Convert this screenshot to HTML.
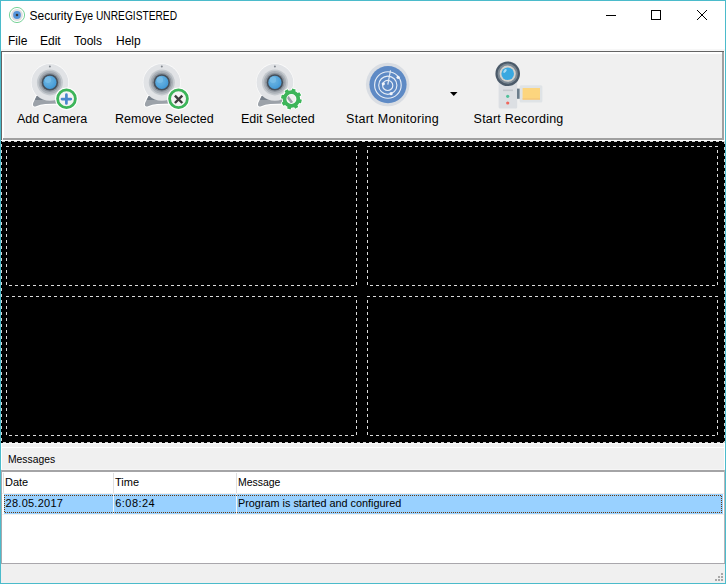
<!DOCTYPE html>
<html><head><meta charset="utf-8">
<style>
html,body{margin:0;padding:0;width:726px;height:584px;overflow:hidden;background:#fff;}
body{position:relative;font-family:"Liberation Sans",sans-serif;color:#000;}
.a{position:absolute;}
.t{position:absolute;white-space:nowrap;line-height:1;transform-origin:0 0;}
</style></head><body>
<!-- window border -->
<div class="a" style="left:0;top:0;width:726px;height:1px;background:#4bbbcb"></div>
<div class="a" style="left:0;top:0;width:1px;height:584px;background:#4bbbcb"></div>
<div class="a" style="left:725px;top:0;width:1px;height:584px;background:#4bbbcb"></div>
<div class="a" style="left:0;top:583px;width:726px;height:1px;background:#4bbbcb"></div>

<!-- title -->
<div class="t" style="left:29.5px;top:10px;font-size:12px;">Security</div>
<div class="t" style="left:75.2px;top:10px;font-size:12px;transform:scaleX(0.87);">Eye</div>
<div class="t" style="left:96px;top:10px;font-size:12px;transform:scaleX(0.85);">UNREGISTERED</div>

<!-- menu -->
<div class="t" style="left:8px;top:35px;font-size:12px;">File</div>
<div class="t" style="left:40px;top:35px;font-size:12px;">Edit</div>
<div class="t" style="left:74px;top:35px;font-size:12px;">Tools</div>
<div class="t" style="left:116px;top:35px;font-size:12px;">Help</div>

<!-- toolbar panel -->
<div class="a" style="left:1px;top:49px;width:724px;height:2px;background:#f7f7f7"></div>
<div class="a" style="left:1px;top:51px;width:724px;height:90px;background:#f0f0f0"></div>
<div class="a" style="left:1px;top:51px;width:723px;height:1px;background:#646464"></div>
<div class="a" style="left:1px;top:51px;width:1px;height:89px;background:#646464"></div>
<div class="a" style="left:2px;top:52px;width:721px;height:2px;background:#fff"></div>
<div class="a" style="left:2px;top:52px;width:2px;height:87px;background:#fff"></div>
<div class="a" style="left:3px;top:138px;width:721px;height:2px;background:#a0a0a0"></div>
<div class="a" style="left:722px;top:52px;width:2px;height:88px;background:#a0a0a0"></div>
<div class="a" style="left:1px;top:140px;width:724px;height:1px;background:#fff"></div>
<div class="a" style="left:724px;top:51px;width:1px;height:90px;background:#fff"></div>


<!-- title controls & icon -->
<svg class="a" style="left:0;top:0" width="726" height="140">
 <circle cx="17" cy="15" r="7.6" fill="none" stroke="#7ad39a" stroke-width="1"/>
 <circle cx="17" cy="15" r="5.9" fill="#dedede"/>
 <circle cx="17" cy="15" r="3.9" fill="#5594da"/>
 <circle cx="17" cy="15" r="1.3" fill="#3a3a3a"/>
 <g shape-rendering="crispEdges">
  <rect x="606" y="15" width="10" height="1" fill="#000"/>
  <rect x="651.5" y="10.5" width="9" height="9" fill="none" stroke="#000" stroke-width="1"/>
 </g>
 <path shape-rendering="crispEdges" fill="#000" d="M697 10h1v1h-1zM706 10h1v1h-1zM698 11h1v1h-1zM705 11h1v1h-1zM699 12h1v1h-1zM704 12h1v1h-1zM700 13h1v1h-1zM703 13h1v1h-1zM701 14h1v1h-1zM702 14h1v1h-1zM702 15h1v1h-1zM701 15h1v1h-1zM703 16h1v1h-1zM700 16h1v1h-1zM704 17h1v1h-1zM699 17h1v1h-1zM705 18h1v1h-1zM698 18h1v1h-1zM706 19h1v1h-1zM697 19h1v1h-1z"/>
</svg>
<svg class="a" style="left:0;top:0" width="726" height="140">
 <defs>
  <radialGradient id="lens" cx="0.38" cy="0.36" r="0.7">
   <stop offset="0" stop-color="#6ab5e2"/>
   <stop offset="0.5" stop-color="#5aa9dd"/>
   <stop offset="1" stop-color="#3f97d6"/>
  </radialGradient>
  <radialGradient id="rg" cx="0.5" cy="0.5" r="0.5">
   <stop offset="0.62" stop-color="#6f7780"/>
   <stop offset="0.8" stop-color="#9aa0a6"/>
   <stop offset="1" stop-color="#c8cbcf"/>
  </radialGradient>
  
  
 </defs>
 <g transform="translate(49.9 82.4)">
   <circle r="19" fill="#fcfcfc"/>
   <path d="M-13.4 13.5 L-16.7 20.5 Q-17.8 24.2 -14.4 24.2 Q-9.5 21.9 -4.7 21.6 L10 21.2 L10 14 Z" fill="#fff" stroke="#fff" stroke-width="2"/>
   <path d="M-13.4 13.5 L-16.7 20.5 Q-17.8 24.2 -14.4 24.2 Q-9.5 21.9 -4.7 21.6 L10 21.2 L10 14 Z" fill="#9ca2a9"/>
   <path d="M-13 13.5 L-15 17.5 L8 17.5 L8 14 Z" fill="#78818b"/>
   <circle r="18.4" fill="#e1e3e6"/>
   <circle r="13" fill="#c4c9ce"/>
   <circle r="11.3" fill="#aab0b7"/>
   <circle r="9.7" fill="#8d949c"/>
   <circle r="8.2" fill="#46505b"/>
   <circle r="6.6" fill="url(#lens)"/>
   <circle cx="-1.9" cy="-2.6" r="3.2" fill="#7dc0e9" opacity="0.7"/>
   <circle cx="0" cy="-15.8" r="1" fill="#80868d"/></g>
 <g transform="translate(66.5 98.8)">
   <circle r="11.4" fill="#fff"/>
   <circle r="10.3" fill="#f4f4f4"/>
   <circle r="8.9" fill="none" stroke="#3db55a" stroke-width="2.8"/></g>
 <path d="M62 99.1H70.8M66.4 94.7V103.5" stroke="#4a87cd" stroke-width="2.7" stroke-linecap="round"/>

 <g transform="translate(161.8 82.4)">
   <circle r="19" fill="#fcfcfc"/>
   <path d="M-13.4 13.5 L-16.7 20.5 Q-17.8 24.2 -14.4 24.2 Q-9.5 21.9 -4.7 21.6 L10 21.2 L10 14 Z" fill="#fff" stroke="#fff" stroke-width="2"/>
   <path d="M-13.4 13.5 L-16.7 20.5 Q-17.8 24.2 -14.4 24.2 Q-9.5 21.9 -4.7 21.6 L10 21.2 L10 14 Z" fill="#9ca2a9"/>
   <path d="M-13 13.5 L-15 17.5 L8 17.5 L8 14 Z" fill="#78818b"/>
   <circle r="18.4" fill="#e1e3e6"/>
   <circle r="13" fill="#c4c9ce"/>
   <circle r="11.3" fill="#aab0b7"/>
   <circle r="9.7" fill="#8d949c"/>
   <circle r="8.2" fill="#46505b"/>
   <circle r="6.6" fill="url(#lens)"/>
   <circle cx="-1.9" cy="-2.6" r="3.2" fill="#7dc0e9" opacity="0.7"/>
   <circle cx="0" cy="-15.8" r="1" fill="#80868d"/></g>
 <g transform="translate(178.5 98.8)">
   <circle r="11.4" fill="#fff"/>
   <circle r="10.3" fill="#f4f4f4"/>
   <circle r="8.9" fill="none" stroke="#3db55a" stroke-width="2.8"/></g>
 <path d="M174.9 95.6L182.3 103M182.3 95.6L174.9 103" stroke="#3c3c3c" stroke-width="2.4"/>

 <g transform="translate(274.9 82.4)">
   <circle r="19" fill="#fcfcfc"/>
   <path d="M-13.4 13.5 L-16.7 20.5 Q-17.8 24.2 -14.4 24.2 Q-9.5 21.9 -4.7 21.6 L10 21.2 L10 14 Z" fill="#fff" stroke="#fff" stroke-width="2"/>
   <path d="M-13.4 13.5 L-16.7 20.5 Q-17.8 24.2 -14.4 24.2 Q-9.5 21.9 -4.7 21.6 L10 21.2 L10 14 Z" fill="#9ca2a9"/>
   <path d="M-13 13.5 L-15 17.5 L8 17.5 L8 14 Z" fill="#78818b"/>
   <circle r="18.4" fill="#e1e3e6"/>
   <circle r="13" fill="#c4c9ce"/>
   <circle r="11.3" fill="#aab0b7"/>
   <circle r="9.7" fill="#8d949c"/>
   <circle r="8.2" fill="#46505b"/>
   <circle r="6.6" fill="url(#lens)"/>
   <circle cx="-1.9" cy="-2.6" r="3.2" fill="#7dc0e9" opacity="0.7"/>
   <circle cx="0" cy="-15.8" r="1" fill="#80868d"/></g>
 <g transform="translate(291.4 99)">
  <path d="M-4.2 -2.6L0.6 3.8" stroke="#9aa0a8" stroke-width="2.6"/>
  <path fill-rule="evenodd" d="M0.23 -8.70L0.76 -10.47L4.24 -9.61L3.88 -7.79A8.7 8.7 0 0 1 6.31 -5.99L7.95 -6.86L9.79 -3.79L8.25 -2.76A8.7 8.7 0 0 1 8.70 0.23L10.47 0.76L9.61 4.24L7.79 3.88A8.7 8.7 0 0 1 5.99 6.31L6.86 7.95L3.79 9.79L2.76 8.25A8.7 8.7 0 0 1 -0.23 8.70L-0.76 10.47L-4.24 9.61L-3.88 7.79A8.7 8.7 0 0 1 -6.31 5.99L-7.95 6.86L-9.79 3.79L-8.25 2.76A8.7 8.7 0 0 1 -8.70 -0.23L-10.47 -0.76L-9.61 -4.24L-7.79 -3.88A8.7 8.7 0 0 1 -5.99 -6.31L-6.86 -7.95L-3.79 -9.79L-2.76 -8.25A8.7 8.7 0 0 1 0.23 -8.70ZM0 -5A5 5 0 1 0 0 5A5 5 0 1 0 0 -5Z" fill="none" stroke="#fff" stroke-width="1.6" stroke-linejoin="round"/>
  <path fill-rule="evenodd" d="M0.23 -8.70L0.76 -10.47L4.24 -9.61L3.88 -7.79A8.7 8.7 0 0 1 6.31 -5.99L7.95 -6.86L9.79 -3.79L8.25 -2.76A8.7 8.7 0 0 1 8.70 0.23L10.47 0.76L9.61 4.24L7.79 3.88A8.7 8.7 0 0 1 5.99 6.31L6.86 7.95L3.79 9.79L2.76 8.25A8.7 8.7 0 0 1 -0.23 8.70L-0.76 10.47L-4.24 9.61L-3.88 7.79A8.7 8.7 0 0 1 -6.31 5.99L-7.95 6.86L-9.79 3.79L-8.25 2.76A8.7 8.7 0 0 1 -8.70 -0.23L-10.47 -0.76L-9.61 -4.24L-7.79 -3.88A8.7 8.7 0 0 1 -5.99 -6.31L-6.86 -7.95L-3.79 -9.79L-2.76 -8.25A8.7 8.7 0 0 1 0.23 -8.70ZM0 -5A5 5 0 1 0 0 5A5 5 0 1 0 0 -5Z" fill="#3db55a"/>
 </g>

 <!-- radar -->
 <circle cx="387.7" cy="84.5" r="21.8" fill="#d9dde3"/>
 <circle cx="388" cy="84.6" r="18.6" fill="#5e8ac5"/>
 <g fill="none" stroke="#e6edf6" stroke-width="1.15">
  <circle cx="387.9" cy="85" r="13.3"/>
  <circle cx="387.8" cy="85.2" r="9.1"/>
  <circle cx="387.7" cy="85.4" r="5.1"/>
  <path d="M387.8 84.6L390.5 70.3"/>
 </g>
 <g fill="#f2f5fb">
  <circle cx="398.1" cy="77.3" r="1.6"/>
  <circle cx="383.3" cy="83.8" r="1.6"/>
  <circle cx="391.1" cy="93.7" r="1.6"/>
 </g>
 <path d="M450 92H457.5L453.75 96Z" fill="#000"/>

 <!-- camcorder -->
 <rect x="498.6" y="79" width="18.6" height="29.5" rx="1.5" fill="#dcdfe3"/>
 <circle cx="507.7" cy="73.7" r="12.3" fill="#4b5a69"/>
 <circle cx="507.7" cy="73.7" r="10.1" fill="#7c8994"/>
 <circle cx="507.7" cy="73.7" r="8.1" fill="#d4d2cd"/>
 <circle cx="507.7" cy="73.7" r="6.3" fill="#3aa8e0"/>
 <ellipse cx="505" cy="71" rx="1.2" ry="2.2" transform="rotate(40 505 71)" fill="#a9dcf5"/>
 <rect x="503" y="89.5" width="10" height="1.6" fill="#c4c8cd"/>
 <circle cx="507.7" cy="96.3" r="1.6" fill="#50c19a"/>
 <circle cx="507.7" cy="103" r="1.6" fill="#f0675c"/>
 <rect x="517" y="88.6" width="3" height="10.2" fill="#6b7d8b"/>
 <rect x="519.6" y="85.2" width="22.8" height="17.4" rx="1.5" fill="#dfe3e6"/>
 <rect x="522.6" y="88" width="17.4" height="11.6" fill="#fcd57e"/><rect x="522.6" y="98.3" width="17.4" height="1.3" fill="#f5c679"/>
</svg>

<!-- toolbar labels -->
<div class="t" style="left:17px;top:113px;font-size:12.5px;">Add Camera</div>
<div class="t" style="left:115px;top:113px;font-size:12.5px;">Remove Selected</div>
<div class="t" style="left:241px;top:113px;font-size:12.5px;">Edit Selected</div>
<div class="t" style="left:346px;top:113px;font-size:12.5px;letter-spacing:0.3px;">Start Monitoring</div>
<div class="t" style="left:473.6px;top:113px;font-size:12.5px;letter-spacing:0.2px;">Start Recording</div>

<!-- video area -->
<div class="a" style="left:1px;top:141px;width:724px;height:302px;background:#000"></div>
<svg class="a" style="left:0;top:0" width="726" height="584" shape-rendering="crispEdges"><path fill="#dcdcdc" d="M6 146h3v1h-3zM12 146h3v1h-3zM18 146h3v1h-3zM24 146h3v1h-3zM30 146h3v1h-3zM36 146h3v1h-3zM42 146h3v1h-3zM48 146h3v1h-3zM54 146h3v1h-3zM60 146h3v1h-3zM66 146h3v1h-3zM72 146h3v1h-3zM78 146h3v1h-3zM84 146h3v1h-3zM90 146h3v1h-3zM96 146h3v1h-3zM102 146h3v1h-3zM108 146h3v1h-3zM114 146h3v1h-3zM120 146h3v1h-3zM126 146h3v1h-3zM132 146h3v1h-3zM138 146h3v1h-3zM144 146h3v1h-3zM150 146h3v1h-3zM156 146h3v1h-3zM162 146h3v1h-3zM168 146h3v1h-3zM174 146h3v1h-3zM180 146h3v1h-3zM186 146h3v1h-3zM192 146h3v1h-3zM198 146h3v1h-3zM204 146h3v1h-3zM210 146h3v1h-3zM216 146h3v1h-3zM222 146h3v1h-3zM228 146h3v1h-3zM234 146h3v1h-3zM240 146h3v1h-3zM246 146h3v1h-3zM252 146h3v1h-3zM258 146h3v1h-3zM264 146h3v1h-3zM270 146h3v1h-3zM276 146h3v1h-3zM282 146h3v1h-3zM288 146h3v1h-3zM294 146h3v1h-3zM300 146h3v1h-3zM306 146h3v1h-3zM312 146h3v1h-3zM318 146h3v1h-3zM324 146h3v1h-3zM330 146h3v1h-3zM336 146h3v1h-3zM342 146h3v1h-3zM348 146h3v1h-3zM354 146h2v1h-2zM367 146h3v1h-3zM373 146h3v1h-3zM379 146h3v1h-3zM385 146h3v1h-3zM391 146h3v1h-3zM397 146h3v1h-3zM403 146h3v1h-3zM409 146h3v1h-3zM415 146h3v1h-3zM421 146h3v1h-3zM427 146h3v1h-3zM433 146h3v1h-3zM439 146h3v1h-3zM445 146h3v1h-3zM451 146h3v1h-3zM457 146h3v1h-3zM463 146h3v1h-3zM469 146h3v1h-3zM475 146h3v1h-3zM481 146h3v1h-3zM487 146h3v1h-3zM493 146h3v1h-3zM499 146h3v1h-3zM505 146h3v1h-3zM511 146h3v1h-3zM517 146h3v1h-3zM523 146h3v1h-3zM529 146h3v1h-3zM535 146h3v1h-3zM541 146h3v1h-3zM547 146h3v1h-3zM553 146h3v1h-3zM559 146h3v1h-3zM565 146h3v1h-3zM571 146h3v1h-3zM577 146h3v1h-3zM583 146h3v1h-3zM589 146h3v1h-3zM595 146h3v1h-3zM601 146h3v1h-3zM607 146h3v1h-3zM613 146h3v1h-3zM619 146h3v1h-3zM625 146h3v1h-3zM631 146h3v1h-3zM637 146h3v1h-3zM643 146h3v1h-3zM649 146h3v1h-3zM655 146h3v1h-3zM661 146h3v1h-3zM667 146h3v1h-3zM673 146h3v1h-3zM679 146h3v1h-3zM685 146h3v1h-3zM691 146h3v1h-3zM697 146h3v1h-3zM703 146h3v1h-3zM709 146h3v1h-3zM715 146h2v1h-2zM9 285h3v1h-3zM15 285h3v1h-3zM21 285h3v1h-3zM27 285h3v1h-3zM33 285h3v1h-3zM39 285h3v1h-3zM45 285h3v1h-3zM51 285h3v1h-3zM57 285h3v1h-3zM63 285h3v1h-3zM69 285h3v1h-3zM75 285h3v1h-3zM81 285h3v1h-3zM87 285h3v1h-3zM93 285h3v1h-3zM99 285h3v1h-3zM105 285h3v1h-3zM111 285h3v1h-3zM117 285h3v1h-3zM123 285h3v1h-3zM129 285h3v1h-3zM135 285h3v1h-3zM141 285h3v1h-3zM147 285h3v1h-3zM153 285h3v1h-3zM159 285h3v1h-3zM165 285h3v1h-3zM171 285h3v1h-3zM177 285h3v1h-3zM183 285h3v1h-3zM189 285h3v1h-3zM195 285h3v1h-3zM201 285h3v1h-3zM207 285h3v1h-3zM213 285h3v1h-3zM219 285h3v1h-3zM225 285h3v1h-3zM231 285h3v1h-3zM237 285h3v1h-3zM243 285h3v1h-3zM249 285h3v1h-3zM255 285h3v1h-3zM261 285h3v1h-3zM267 285h3v1h-3zM273 285h3v1h-3zM279 285h3v1h-3zM285 285h3v1h-3zM291 285h3v1h-3zM297 285h3v1h-3zM303 285h3v1h-3zM309 285h3v1h-3zM315 285h3v1h-3zM321 285h3v1h-3zM327 285h3v1h-3zM333 285h3v1h-3zM339 285h3v1h-3zM345 285h3v1h-3zM351 285h3v1h-3zM370 285h3v1h-3zM376 285h3v1h-3zM382 285h3v1h-3zM388 285h3v1h-3zM394 285h3v1h-3zM400 285h3v1h-3zM406 285h3v1h-3zM412 285h3v1h-3zM418 285h3v1h-3zM424 285h3v1h-3zM430 285h3v1h-3zM436 285h3v1h-3zM442 285h3v1h-3zM448 285h3v1h-3zM454 285h3v1h-3zM460 285h3v1h-3zM466 285h3v1h-3zM472 285h3v1h-3zM478 285h3v1h-3zM484 285h3v1h-3zM490 285h3v1h-3zM496 285h3v1h-3zM502 285h3v1h-3zM508 285h3v1h-3zM514 285h3v1h-3zM520 285h3v1h-3zM526 285h3v1h-3zM532 285h3v1h-3zM538 285h3v1h-3zM544 285h3v1h-3zM550 285h3v1h-3zM556 285h3v1h-3zM562 285h3v1h-3zM568 285h3v1h-3zM574 285h3v1h-3zM580 285h3v1h-3zM586 285h3v1h-3zM592 285h3v1h-3zM598 285h3v1h-3zM604 285h3v1h-3zM610 285h3v1h-3zM616 285h3v1h-3zM622 285h3v1h-3zM628 285h3v1h-3zM634 285h3v1h-3zM640 285h3v1h-3zM646 285h3v1h-3zM652 285h3v1h-3zM658 285h3v1h-3zM664 285h3v1h-3zM670 285h3v1h-3zM676 285h3v1h-3zM682 285h3v1h-3zM688 285h3v1h-3zM694 285h3v1h-3zM700 285h3v1h-3zM706 285h3v1h-3zM712 285h3v1h-3zM6 296h3v1h-3zM12 296h3v1h-3zM18 296h3v1h-3zM24 296h3v1h-3zM30 296h3v1h-3zM36 296h3v1h-3zM42 296h3v1h-3zM48 296h3v1h-3zM54 296h3v1h-3zM60 296h3v1h-3zM66 296h3v1h-3zM72 296h3v1h-3zM78 296h3v1h-3zM84 296h3v1h-3zM90 296h3v1h-3zM96 296h3v1h-3zM102 296h3v1h-3zM108 296h3v1h-3zM114 296h3v1h-3zM120 296h3v1h-3zM126 296h3v1h-3zM132 296h3v1h-3zM138 296h3v1h-3zM144 296h3v1h-3zM150 296h3v1h-3zM156 296h3v1h-3zM162 296h3v1h-3zM168 296h3v1h-3zM174 296h3v1h-3zM180 296h3v1h-3zM186 296h3v1h-3zM192 296h3v1h-3zM198 296h3v1h-3zM204 296h3v1h-3zM210 296h3v1h-3zM216 296h3v1h-3zM222 296h3v1h-3zM228 296h3v1h-3zM234 296h3v1h-3zM240 296h3v1h-3zM246 296h3v1h-3zM252 296h3v1h-3zM258 296h3v1h-3zM264 296h3v1h-3zM270 296h3v1h-3zM276 296h3v1h-3zM282 296h3v1h-3zM288 296h3v1h-3zM294 296h3v1h-3zM300 296h3v1h-3zM306 296h3v1h-3zM312 296h3v1h-3zM318 296h3v1h-3zM324 296h3v1h-3zM330 296h3v1h-3zM336 296h3v1h-3zM342 296h3v1h-3zM348 296h3v1h-3zM354 296h2v1h-2zM367 296h3v1h-3zM373 296h3v1h-3zM379 296h3v1h-3zM385 296h3v1h-3zM391 296h3v1h-3zM397 296h3v1h-3zM403 296h3v1h-3zM409 296h3v1h-3zM415 296h3v1h-3zM421 296h3v1h-3zM427 296h3v1h-3zM433 296h3v1h-3zM439 296h3v1h-3zM445 296h3v1h-3zM451 296h3v1h-3zM457 296h3v1h-3zM463 296h3v1h-3zM469 296h3v1h-3zM475 296h3v1h-3zM481 296h3v1h-3zM487 296h3v1h-3zM493 296h3v1h-3zM499 296h3v1h-3zM505 296h3v1h-3zM511 296h3v1h-3zM517 296h3v1h-3zM523 296h3v1h-3zM529 296h3v1h-3zM535 296h3v1h-3zM541 296h3v1h-3zM547 296h3v1h-3zM553 296h3v1h-3zM559 296h3v1h-3zM565 296h3v1h-3zM571 296h3v1h-3zM577 296h3v1h-3zM583 296h3v1h-3zM589 296h3v1h-3zM595 296h3v1h-3zM601 296h3v1h-3zM607 296h3v1h-3zM613 296h3v1h-3zM619 296h3v1h-3zM625 296h3v1h-3zM631 296h3v1h-3zM637 296h3v1h-3zM643 296h3v1h-3zM649 296h3v1h-3zM655 296h3v1h-3zM661 296h3v1h-3zM667 296h3v1h-3zM673 296h3v1h-3zM679 296h3v1h-3zM685 296h3v1h-3zM691 296h3v1h-3zM697 296h3v1h-3zM703 296h3v1h-3zM709 296h3v1h-3zM715 296h2v1h-2zM9 435h3v1h-3zM15 435h3v1h-3zM21 435h3v1h-3zM27 435h3v1h-3zM33 435h3v1h-3zM39 435h3v1h-3zM45 435h3v1h-3zM51 435h3v1h-3zM57 435h3v1h-3zM63 435h3v1h-3zM69 435h3v1h-3zM75 435h3v1h-3zM81 435h3v1h-3zM87 435h3v1h-3zM93 435h3v1h-3zM99 435h3v1h-3zM105 435h3v1h-3zM111 435h3v1h-3zM117 435h3v1h-3zM123 435h3v1h-3zM129 435h3v1h-3zM135 435h3v1h-3zM141 435h3v1h-3zM147 435h3v1h-3zM153 435h3v1h-3zM159 435h3v1h-3zM165 435h3v1h-3zM171 435h3v1h-3zM177 435h3v1h-3zM183 435h3v1h-3zM189 435h3v1h-3zM195 435h3v1h-3zM201 435h3v1h-3zM207 435h3v1h-3zM213 435h3v1h-3zM219 435h3v1h-3zM225 435h3v1h-3zM231 435h3v1h-3zM237 435h3v1h-3zM243 435h3v1h-3zM249 435h3v1h-3zM255 435h3v1h-3zM261 435h3v1h-3zM267 435h3v1h-3zM273 435h3v1h-3zM279 435h3v1h-3zM285 435h3v1h-3zM291 435h3v1h-3zM297 435h3v1h-3zM303 435h3v1h-3zM309 435h3v1h-3zM315 435h3v1h-3zM321 435h3v1h-3zM327 435h3v1h-3zM333 435h3v1h-3zM339 435h3v1h-3zM345 435h3v1h-3zM351 435h3v1h-3zM370 435h3v1h-3zM376 435h3v1h-3zM382 435h3v1h-3zM388 435h3v1h-3zM394 435h3v1h-3zM400 435h3v1h-3zM406 435h3v1h-3zM412 435h3v1h-3zM418 435h3v1h-3zM424 435h3v1h-3zM430 435h3v1h-3zM436 435h3v1h-3zM442 435h3v1h-3zM448 435h3v1h-3zM454 435h3v1h-3zM460 435h3v1h-3zM466 435h3v1h-3zM472 435h3v1h-3zM478 435h3v1h-3zM484 435h3v1h-3zM490 435h3v1h-3zM496 435h3v1h-3zM502 435h3v1h-3zM508 435h3v1h-3zM514 435h3v1h-3zM520 435h3v1h-3zM526 435h3v1h-3zM532 435h3v1h-3zM538 435h3v1h-3zM544 435h3v1h-3zM550 435h3v1h-3zM556 435h3v1h-3zM562 435h3v1h-3zM568 435h3v1h-3zM574 435h3v1h-3zM580 435h3v1h-3zM586 435h3v1h-3zM592 435h3v1h-3zM598 435h3v1h-3zM604 435h3v1h-3zM610 435h3v1h-3zM616 435h3v1h-3zM622 435h3v1h-3zM628 435h3v1h-3zM634 435h3v1h-3zM640 435h3v1h-3zM646 435h3v1h-3zM652 435h3v1h-3zM658 435h3v1h-3zM664 435h3v1h-3zM670 435h3v1h-3zM676 435h3v1h-3zM682 435h3v1h-3zM688 435h3v1h-3zM694 435h3v1h-3zM700 435h3v1h-3zM706 435h3v1h-3zM712 435h3v1h-3zM6 150h1v3h-1zM6 156h1v3h-1zM6 162h1v3h-1zM6 168h1v3h-1zM6 174h1v3h-1zM6 180h1v3h-1zM6 186h1v3h-1zM6 192h1v3h-1zM6 198h1v3h-1zM6 204h1v3h-1zM6 210h1v3h-1zM6 216h1v3h-1zM6 222h1v3h-1zM6 228h1v3h-1zM6 234h1v3h-1zM6 240h1v3h-1zM6 246h1v3h-1zM6 252h1v3h-1zM6 258h1v3h-1zM6 264h1v3h-1zM6 270h1v3h-1zM6 276h1v3h-1zM6 282h1v3h-1zM6 300h1v3h-1zM6 306h1v3h-1zM6 312h1v3h-1zM6 318h1v3h-1zM6 324h1v3h-1zM6 330h1v3h-1zM6 336h1v3h-1zM6 342h1v3h-1zM6 348h1v3h-1zM6 354h1v3h-1zM6 360h1v3h-1zM6 366h1v3h-1zM6 372h1v3h-1zM6 378h1v3h-1zM6 384h1v3h-1zM6 390h1v3h-1zM6 396h1v3h-1zM6 402h1v3h-1zM6 408h1v3h-1zM6 414h1v3h-1zM6 420h1v3h-1zM6 426h1v3h-1zM6 432h1v3h-1zM356 146h1v1h-1zM356 150h1v3h-1zM356 156h1v3h-1zM356 162h1v3h-1zM356 168h1v3h-1zM356 174h1v3h-1zM356 180h1v3h-1zM356 186h1v3h-1zM356 192h1v3h-1zM356 198h1v3h-1zM356 204h1v3h-1zM356 210h1v3h-1zM356 216h1v3h-1zM356 222h1v3h-1zM356 228h1v3h-1zM356 234h1v3h-1zM356 240h1v3h-1zM356 246h1v3h-1zM356 252h1v3h-1zM356 258h1v3h-1zM356 264h1v3h-1zM356 270h1v3h-1zM356 276h1v3h-1zM356 282h1v3h-1zM356 296h1v1h-1zM356 300h1v3h-1zM356 306h1v3h-1zM356 312h1v3h-1zM356 318h1v3h-1zM356 324h1v3h-1zM356 330h1v3h-1zM356 336h1v3h-1zM356 342h1v3h-1zM356 348h1v3h-1zM356 354h1v3h-1zM356 360h1v3h-1zM356 366h1v3h-1zM356 372h1v3h-1zM356 378h1v3h-1zM356 384h1v3h-1zM356 390h1v3h-1zM356 396h1v3h-1zM356 402h1v3h-1zM356 408h1v3h-1zM356 414h1v3h-1zM356 420h1v3h-1zM356 426h1v3h-1zM356 432h1v3h-1zM367 150h1v3h-1zM367 156h1v3h-1zM367 162h1v3h-1zM367 168h1v3h-1zM367 174h1v3h-1zM367 180h1v3h-1zM367 186h1v3h-1zM367 192h1v3h-1zM367 198h1v3h-1zM367 204h1v3h-1zM367 210h1v3h-1zM367 216h1v3h-1zM367 222h1v3h-1zM367 228h1v3h-1zM367 234h1v3h-1zM367 240h1v3h-1zM367 246h1v3h-1zM367 252h1v3h-1zM367 258h1v3h-1zM367 264h1v3h-1zM367 270h1v3h-1zM367 276h1v3h-1zM367 282h1v3h-1zM367 300h1v3h-1zM367 306h1v3h-1zM367 312h1v3h-1zM367 318h1v3h-1zM367 324h1v3h-1zM367 330h1v3h-1zM367 336h1v3h-1zM367 342h1v3h-1zM367 348h1v3h-1zM367 354h1v3h-1zM367 360h1v3h-1zM367 366h1v3h-1zM367 372h1v3h-1zM367 378h1v3h-1zM367 384h1v3h-1zM367 390h1v3h-1zM367 396h1v3h-1zM367 402h1v3h-1zM367 408h1v3h-1zM367 414h1v3h-1zM367 420h1v3h-1zM367 426h1v3h-1zM367 432h1v3h-1zM717 146h1v1h-1zM717 150h1v3h-1zM717 156h1v3h-1zM717 162h1v3h-1zM717 168h1v3h-1zM717 174h1v3h-1zM717 180h1v3h-1zM717 186h1v3h-1zM717 192h1v3h-1zM717 198h1v3h-1zM717 204h1v3h-1zM717 210h1v3h-1zM717 216h1v3h-1zM717 222h1v3h-1zM717 228h1v3h-1zM717 234h1v3h-1zM717 240h1v3h-1zM717 246h1v3h-1zM717 252h1v3h-1zM717 258h1v3h-1zM717 264h1v3h-1zM717 270h1v3h-1zM717 276h1v3h-1zM717 282h1v3h-1zM717 296h1v1h-1zM717 300h1v3h-1zM717 306h1v3h-1zM717 312h1v3h-1zM717 318h1v3h-1zM717 324h1v3h-1zM717 330h1v3h-1zM717 336h1v3h-1zM717 342h1v3h-1zM717 348h1v3h-1zM717 354h1v3h-1zM717 360h1v3h-1zM717 366h1v3h-1zM717 372h1v3h-1zM717 378h1v3h-1zM717 384h1v3h-1zM717 390h1v3h-1zM717 396h1v3h-1zM717 402h1v3h-1zM717 408h1v3h-1zM717 414h1v3h-1zM717 420h1v3h-1zM717 426h1v3h-1zM717 432h1v3h-1z"/><path fill="#d2d2d2" d="M2 141h3v1h-3zM8 141h3v1h-3zM14 141h3v1h-3zM20 141h3v1h-3zM26 141h3v1h-3zM32 141h3v1h-3zM38 141h3v1h-3zM44 141h3v1h-3zM50 141h3v1h-3zM56 141h3v1h-3zM62 141h3v1h-3zM68 141h3v1h-3zM74 141h3v1h-3zM80 141h3v1h-3zM86 141h3v1h-3zM92 141h3v1h-3zM98 141h3v1h-3zM104 141h3v1h-3zM110 141h3v1h-3zM116 141h3v1h-3zM122 141h3v1h-3zM128 141h3v1h-3zM134 141h3v1h-3zM140 141h3v1h-3zM146 141h3v1h-3zM152 141h3v1h-3zM158 141h3v1h-3zM164 141h3v1h-3zM170 141h3v1h-3zM176 141h3v1h-3zM182 141h3v1h-3zM188 141h3v1h-3zM194 141h3v1h-3zM200 141h3v1h-3zM206 141h3v1h-3zM212 141h3v1h-3zM218 141h3v1h-3zM224 141h3v1h-3zM230 141h3v1h-3zM236 141h3v1h-3zM242 141h3v1h-3zM248 141h3v1h-3zM254 141h3v1h-3zM260 141h3v1h-3zM266 141h3v1h-3zM272 141h3v1h-3zM278 141h3v1h-3zM284 141h3v1h-3zM290 141h3v1h-3zM296 141h3v1h-3zM302 141h3v1h-3zM308 141h3v1h-3zM314 141h3v1h-3zM320 141h3v1h-3zM326 141h3v1h-3zM332 141h3v1h-3zM338 141h3v1h-3zM344 141h3v1h-3zM350 141h3v1h-3zM356 141h3v1h-3zM362 141h3v1h-3zM368 141h3v1h-3zM374 141h3v1h-3zM380 141h3v1h-3zM386 141h3v1h-3zM392 141h3v1h-3zM398 141h3v1h-3zM404 141h3v1h-3zM410 141h3v1h-3zM416 141h3v1h-3zM422 141h3v1h-3zM428 141h3v1h-3zM434 141h3v1h-3zM440 141h3v1h-3zM446 141h3v1h-3zM452 141h3v1h-3zM458 141h3v1h-3zM464 141h3v1h-3zM470 141h3v1h-3zM476 141h3v1h-3zM482 141h3v1h-3zM488 141h3v1h-3zM494 141h3v1h-3zM500 141h3v1h-3zM506 141h3v1h-3zM512 141h3v1h-3zM518 141h3v1h-3zM524 141h3v1h-3zM530 141h3v1h-3zM536 141h3v1h-3zM542 141h3v1h-3zM548 141h3v1h-3zM554 141h3v1h-3zM560 141h3v1h-3zM566 141h3v1h-3zM572 141h3v1h-3zM578 141h3v1h-3zM584 141h3v1h-3zM590 141h3v1h-3zM596 141h3v1h-3zM602 141h3v1h-3zM608 141h3v1h-3zM614 141h3v1h-3zM620 141h3v1h-3zM626 141h3v1h-3zM632 141h3v1h-3zM638 141h3v1h-3zM644 141h3v1h-3zM650 141h3v1h-3zM656 141h3v1h-3zM662 141h3v1h-3zM668 141h3v1h-3zM674 141h3v1h-3zM680 141h3v1h-3zM686 141h3v1h-3zM692 141h3v1h-3zM698 141h3v1h-3zM704 141h3v1h-3zM710 141h3v1h-3zM716 141h3v1h-3zM722 141h3v1h-3zM3 442h3v1h-3zM9 442h3v1h-3zM15 442h3v1h-3zM21 442h3v1h-3zM27 442h3v1h-3zM33 442h3v1h-3zM39 442h3v1h-3zM45 442h3v1h-3zM51 442h3v1h-3zM57 442h3v1h-3zM63 442h3v1h-3zM69 442h3v1h-3zM75 442h3v1h-3zM81 442h3v1h-3zM87 442h3v1h-3zM93 442h3v1h-3zM99 442h3v1h-3zM105 442h3v1h-3zM111 442h3v1h-3zM117 442h3v1h-3zM123 442h3v1h-3zM129 442h3v1h-3zM135 442h3v1h-3zM141 442h3v1h-3zM147 442h3v1h-3zM153 442h3v1h-3zM159 442h3v1h-3zM165 442h3v1h-3zM171 442h3v1h-3zM177 442h3v1h-3zM183 442h3v1h-3zM189 442h3v1h-3zM195 442h3v1h-3zM201 442h3v1h-3zM207 442h3v1h-3zM213 442h3v1h-3zM219 442h3v1h-3zM225 442h3v1h-3zM231 442h3v1h-3zM237 442h3v1h-3zM243 442h3v1h-3zM249 442h3v1h-3zM255 442h3v1h-3zM261 442h3v1h-3zM267 442h3v1h-3zM273 442h3v1h-3zM279 442h3v1h-3zM285 442h3v1h-3zM291 442h3v1h-3zM297 442h3v1h-3zM303 442h3v1h-3zM309 442h3v1h-3zM315 442h3v1h-3zM321 442h3v1h-3zM327 442h3v1h-3zM333 442h3v1h-3zM339 442h3v1h-3zM345 442h3v1h-3zM351 442h3v1h-3zM357 442h3v1h-3zM363 442h3v1h-3zM369 442h3v1h-3zM375 442h3v1h-3zM381 442h3v1h-3zM387 442h3v1h-3zM393 442h3v1h-3zM399 442h3v1h-3zM405 442h3v1h-3zM411 442h3v1h-3zM417 442h3v1h-3zM423 442h3v1h-3zM429 442h3v1h-3zM435 442h3v1h-3zM441 442h3v1h-3zM447 442h3v1h-3zM453 442h3v1h-3zM459 442h3v1h-3zM465 442h3v1h-3zM471 442h3v1h-3zM477 442h3v1h-3zM483 442h3v1h-3zM489 442h3v1h-3zM495 442h3v1h-3zM501 442h3v1h-3zM507 442h3v1h-3zM513 442h3v1h-3zM519 442h3v1h-3zM525 442h3v1h-3zM531 442h3v1h-3zM537 442h3v1h-3zM543 442h3v1h-3zM549 442h3v1h-3zM555 442h3v1h-3zM561 442h3v1h-3zM567 442h3v1h-3zM573 442h3v1h-3zM579 442h3v1h-3zM585 442h3v1h-3zM591 442h3v1h-3zM597 442h3v1h-3zM603 442h3v1h-3zM609 442h3v1h-3zM615 442h3v1h-3zM621 442h3v1h-3zM627 442h3v1h-3zM633 442h3v1h-3zM639 442h3v1h-3zM645 442h3v1h-3zM651 442h3v1h-3zM657 442h3v1h-3zM663 442h3v1h-3zM669 442h3v1h-3zM675 442h3v1h-3zM681 442h3v1h-3zM687 442h3v1h-3zM693 442h3v1h-3zM699 442h3v1h-3zM705 442h3v1h-3zM711 442h3v1h-3zM717 442h3v1h-3zM723 442h2v1h-2zM1 144h1v3h-1zM1 150h1v3h-1zM1 156h1v3h-1zM1 162h1v3h-1zM1 168h1v3h-1zM1 174h1v3h-1zM1 180h1v3h-1zM1 186h1v3h-1zM1 192h1v3h-1zM1 198h1v3h-1zM1 204h1v3h-1zM1 210h1v3h-1zM1 216h1v3h-1zM1 222h1v3h-1zM1 228h1v3h-1zM1 234h1v3h-1zM1 240h1v3h-1zM1 246h1v3h-1zM1 252h1v3h-1zM1 258h1v3h-1zM1 264h1v3h-1zM1 270h1v3h-1zM1 276h1v3h-1zM1 282h1v3h-1zM1 288h1v3h-1zM1 294h1v3h-1zM1 300h1v3h-1zM1 306h1v3h-1zM1 312h1v3h-1zM1 318h1v3h-1zM1 324h1v3h-1zM1 330h1v3h-1zM1 336h1v3h-1zM1 342h1v3h-1zM1 348h1v3h-1zM1 354h1v3h-1zM1 360h1v3h-1zM1 366h1v3h-1zM1 372h1v3h-1zM1 378h1v3h-1zM1 384h1v3h-1zM1 390h1v3h-1zM1 396h1v3h-1zM1 402h1v3h-1zM1 408h1v3h-1zM1 414h1v3h-1zM1 420h1v3h-1zM1 426h1v3h-1zM1 432h1v3h-1zM1 438h1v3h-1zM724 142h1v2h-1zM724 147h1v3h-1zM724 153h1v3h-1zM724 159h1v3h-1zM724 165h1v3h-1zM724 171h1v3h-1zM724 177h1v3h-1zM724 183h1v3h-1zM724 189h1v3h-1zM724 195h1v3h-1zM724 201h1v3h-1zM724 207h1v3h-1zM724 213h1v3h-1zM724 219h1v3h-1zM724 225h1v3h-1zM724 231h1v3h-1zM724 237h1v3h-1zM724 243h1v3h-1zM724 249h1v3h-1zM724 255h1v3h-1zM724 261h1v3h-1zM724 267h1v3h-1zM724 273h1v3h-1zM724 279h1v3h-1zM724 285h1v3h-1zM724 291h1v3h-1zM724 297h1v3h-1zM724 303h1v3h-1zM724 309h1v3h-1zM724 315h1v3h-1zM724 321h1v3h-1zM724 327h1v3h-1zM724 333h1v3h-1zM724 339h1v3h-1zM724 345h1v3h-1zM724 351h1v3h-1zM724 357h1v3h-1zM724 363h1v3h-1zM724 369h1v3h-1zM724 375h1v3h-1zM724 381h1v3h-1zM724 387h1v3h-1zM724 393h1v3h-1zM724 399h1v3h-1zM724 405h1v3h-1zM724 411h1v3h-1zM724 417h1v3h-1zM724 423h1v3h-1zM724 429h1v3h-1zM724 435h1v3h-1zM724 441h1v1h-1z"/></svg>

<!-- messages panel -->
<div class="a" style="left:1px;top:443px;width:724px;height:140px;background:#f0f0f0"></div>
<div class="a" style="left:1px;top:443px;width:724px;height:1px;background:#fbfbfb"></div>
<div class="a" style="left:1px;top:447px;width:723px;height:1px;background:#fff"></div>
<div class="a" style="left:1px;top:443px;width:1px;height:27px;background:#fff"></div>
<div class="a" style="left:724px;top:443px;width:1px;height:27px;background:#fff"></div>
<div class="a" style="left:1px;top:469px;width:724px;height:1px;background:#f6f6f6"></div>
<div class="t" style="left:7.5px;top:454px;font-size:11px;transform:scaleX(0.94);">Messages</div>

<!-- list -->
<div class="a" style="left:1px;top:470px;width:724px;height:94px;background:#fff"></div>
<div class="a" style="left:1px;top:470px;width:724px;height:2px;background:#a4a4a6"></div>
<div class="a" style="left:1px;top:470px;width:1px;height:94px;background:#a9a8ac"></div>
<div class="a" style="left:724px;top:470px;width:1px;height:94px;background:#b8b6ba"></div>
<div class="a" style="left:1px;top:563px;width:724px;height:1px;background:#a9a7ac"></div>
<div class="a" style="left:3px;top:473px;width:1px;height:20px;background:#e0e0e0"></div>
<div class="a" style="left:113px;top:473px;width:1px;height:20px;background:#e0e0e0"></div>
<div class="a" style="left:236px;top:473px;width:1px;height:20px;background:#e0e0e0"></div>
<div class="a" style="left:2px;top:493px;width:722px;height:1px;background:#f2efec"></div>
<div class="a" style="left:2px;top:514px;width:722px;height:1px;background:#f4f1ee"></div>
<div class="t" style="left:5px;top:477px;font-size:11px;">Date</div>
<div class="t" style="left:115px;top:477px;font-size:11px;">Time</div>
<div class="t" style="left:238px;top:477px;font-size:11px;transform:scaleX(0.95);">Message</div>

<div class="a" style="left:4px;top:494px;width:719px;height:20px;background:#99d1ff"></div>
<div class="a" style="left:113px;top:494px;width:1px;height:20px;background:#eef4fa"></div>
<div class="a" style="left:236px;top:494px;width:1px;height:20px;background:#eef4fa"></div>
<svg class="a" style="left:0;top:0" width="726" height="584" shape-rendering="crispEdges">
 <path fill="#6a3a0e" d="M4 495h1v1h-1zM5 512h1v1h-1zM6 495h1v1h-1zM7 512h1v1h-1zM8 495h1v1h-1zM9 512h1v1h-1zM10 495h1v1h-1zM11 512h1v1h-1zM12 495h1v1h-1zM13 512h1v1h-1zM14 495h1v1h-1zM15 512h1v1h-1zM16 495h1v1h-1zM17 512h1v1h-1zM18 495h1v1h-1zM19 512h1v1h-1zM20 495h1v1h-1zM21 512h1v1h-1zM22 495h1v1h-1zM23 512h1v1h-1zM24 495h1v1h-1zM25 512h1v1h-1zM26 495h1v1h-1zM27 512h1v1h-1zM28 495h1v1h-1zM29 512h1v1h-1zM30 495h1v1h-1zM31 512h1v1h-1zM32 495h1v1h-1zM33 512h1v1h-1zM34 495h1v1h-1zM35 512h1v1h-1zM36 495h1v1h-1zM37 512h1v1h-1zM38 495h1v1h-1zM39 512h1v1h-1zM40 495h1v1h-1zM41 512h1v1h-1zM42 495h1v1h-1zM43 512h1v1h-1zM44 495h1v1h-1zM45 512h1v1h-1zM46 495h1v1h-1zM47 512h1v1h-1zM48 495h1v1h-1zM49 512h1v1h-1zM50 495h1v1h-1zM51 512h1v1h-1zM52 495h1v1h-1zM53 512h1v1h-1zM54 495h1v1h-1zM55 512h1v1h-1zM56 495h1v1h-1zM57 512h1v1h-1zM58 495h1v1h-1zM59 512h1v1h-1zM60 495h1v1h-1zM61 512h1v1h-1zM62 495h1v1h-1zM63 512h1v1h-1zM64 495h1v1h-1zM65 512h1v1h-1zM66 495h1v1h-1zM67 512h1v1h-1zM68 495h1v1h-1zM69 512h1v1h-1zM70 495h1v1h-1zM71 512h1v1h-1zM72 495h1v1h-1zM73 512h1v1h-1zM74 495h1v1h-1zM75 512h1v1h-1zM76 495h1v1h-1zM77 512h1v1h-1zM78 495h1v1h-1zM79 512h1v1h-1zM80 495h1v1h-1zM81 512h1v1h-1zM82 495h1v1h-1zM83 512h1v1h-1zM84 495h1v1h-1zM85 512h1v1h-1zM86 495h1v1h-1zM87 512h1v1h-1zM88 495h1v1h-1zM89 512h1v1h-1zM90 495h1v1h-1zM91 512h1v1h-1zM92 495h1v1h-1zM93 512h1v1h-1zM94 495h1v1h-1zM95 512h1v1h-1zM96 495h1v1h-1zM97 512h1v1h-1zM98 495h1v1h-1zM99 512h1v1h-1zM100 495h1v1h-1zM101 512h1v1h-1zM102 495h1v1h-1zM103 512h1v1h-1zM104 495h1v1h-1zM105 512h1v1h-1zM106 495h1v1h-1zM107 512h1v1h-1zM108 495h1v1h-1zM109 512h1v1h-1zM110 495h1v1h-1zM111 512h1v1h-1zM112 495h1v1h-1zM113 512h1v1h-1zM114 495h1v1h-1zM115 512h1v1h-1zM116 495h1v1h-1zM117 512h1v1h-1zM118 495h1v1h-1zM119 512h1v1h-1zM120 495h1v1h-1zM121 512h1v1h-1zM122 495h1v1h-1zM123 512h1v1h-1zM124 495h1v1h-1zM125 512h1v1h-1zM126 495h1v1h-1zM127 512h1v1h-1zM128 495h1v1h-1zM129 512h1v1h-1zM130 495h1v1h-1zM131 512h1v1h-1zM132 495h1v1h-1zM133 512h1v1h-1zM134 495h1v1h-1zM135 512h1v1h-1zM136 495h1v1h-1zM137 512h1v1h-1zM138 495h1v1h-1zM139 512h1v1h-1zM140 495h1v1h-1zM141 512h1v1h-1zM142 495h1v1h-1zM143 512h1v1h-1zM144 495h1v1h-1zM145 512h1v1h-1zM146 495h1v1h-1zM147 512h1v1h-1zM148 495h1v1h-1zM149 512h1v1h-1zM150 495h1v1h-1zM151 512h1v1h-1zM152 495h1v1h-1zM153 512h1v1h-1zM154 495h1v1h-1zM155 512h1v1h-1zM156 495h1v1h-1zM157 512h1v1h-1zM158 495h1v1h-1zM159 512h1v1h-1zM160 495h1v1h-1zM161 512h1v1h-1zM162 495h1v1h-1zM163 512h1v1h-1zM164 495h1v1h-1zM165 512h1v1h-1zM166 495h1v1h-1zM167 512h1v1h-1zM168 495h1v1h-1zM169 512h1v1h-1zM170 495h1v1h-1zM171 512h1v1h-1zM172 495h1v1h-1zM173 512h1v1h-1zM174 495h1v1h-1zM175 512h1v1h-1zM176 495h1v1h-1zM177 512h1v1h-1zM178 495h1v1h-1zM179 512h1v1h-1zM180 495h1v1h-1zM181 512h1v1h-1zM182 495h1v1h-1zM183 512h1v1h-1zM184 495h1v1h-1zM185 512h1v1h-1zM186 495h1v1h-1zM187 512h1v1h-1zM188 495h1v1h-1zM189 512h1v1h-1zM190 495h1v1h-1zM191 512h1v1h-1zM192 495h1v1h-1zM193 512h1v1h-1zM194 495h1v1h-1zM195 512h1v1h-1zM196 495h1v1h-1zM197 512h1v1h-1zM198 495h1v1h-1zM199 512h1v1h-1zM200 495h1v1h-1zM201 512h1v1h-1zM202 495h1v1h-1zM203 512h1v1h-1zM204 495h1v1h-1zM205 512h1v1h-1zM206 495h1v1h-1zM207 512h1v1h-1zM208 495h1v1h-1zM209 512h1v1h-1zM210 495h1v1h-1zM211 512h1v1h-1zM212 495h1v1h-1zM213 512h1v1h-1zM214 495h1v1h-1zM215 512h1v1h-1zM216 495h1v1h-1zM217 512h1v1h-1zM218 495h1v1h-1zM219 512h1v1h-1zM220 495h1v1h-1zM221 512h1v1h-1zM222 495h1v1h-1zM223 512h1v1h-1zM224 495h1v1h-1zM225 512h1v1h-1zM226 495h1v1h-1zM227 512h1v1h-1zM228 495h1v1h-1zM229 512h1v1h-1zM230 495h1v1h-1zM231 512h1v1h-1zM232 495h1v1h-1zM233 512h1v1h-1zM234 495h1v1h-1zM235 512h1v1h-1zM236 495h1v1h-1zM237 512h1v1h-1zM238 495h1v1h-1zM239 512h1v1h-1zM240 495h1v1h-1zM241 512h1v1h-1zM242 495h1v1h-1zM243 512h1v1h-1zM244 495h1v1h-1zM245 512h1v1h-1zM246 495h1v1h-1zM247 512h1v1h-1zM248 495h1v1h-1zM249 512h1v1h-1zM250 495h1v1h-1zM251 512h1v1h-1zM252 495h1v1h-1zM253 512h1v1h-1zM254 495h1v1h-1zM255 512h1v1h-1zM256 495h1v1h-1zM257 512h1v1h-1zM258 495h1v1h-1zM259 512h1v1h-1zM260 495h1v1h-1zM261 512h1v1h-1zM262 495h1v1h-1zM263 512h1v1h-1zM264 495h1v1h-1zM265 512h1v1h-1zM266 495h1v1h-1zM267 512h1v1h-1zM268 495h1v1h-1zM269 512h1v1h-1zM270 495h1v1h-1zM271 512h1v1h-1zM272 495h1v1h-1zM273 512h1v1h-1zM274 495h1v1h-1zM275 512h1v1h-1zM276 495h1v1h-1zM277 512h1v1h-1zM278 495h1v1h-1zM279 512h1v1h-1zM280 495h1v1h-1zM281 512h1v1h-1zM282 495h1v1h-1zM283 512h1v1h-1zM284 495h1v1h-1zM285 512h1v1h-1zM286 495h1v1h-1zM287 512h1v1h-1zM288 495h1v1h-1zM289 512h1v1h-1zM290 495h1v1h-1zM291 512h1v1h-1zM292 495h1v1h-1zM293 512h1v1h-1zM294 495h1v1h-1zM295 512h1v1h-1zM296 495h1v1h-1zM297 512h1v1h-1zM298 495h1v1h-1zM299 512h1v1h-1zM300 495h1v1h-1zM301 512h1v1h-1zM302 495h1v1h-1zM303 512h1v1h-1zM304 495h1v1h-1zM305 512h1v1h-1zM306 495h1v1h-1zM307 512h1v1h-1zM308 495h1v1h-1zM309 512h1v1h-1zM310 495h1v1h-1zM311 512h1v1h-1zM312 495h1v1h-1zM313 512h1v1h-1zM314 495h1v1h-1zM315 512h1v1h-1zM316 495h1v1h-1zM317 512h1v1h-1zM318 495h1v1h-1zM319 512h1v1h-1zM320 495h1v1h-1zM321 512h1v1h-1zM322 495h1v1h-1zM323 512h1v1h-1zM324 495h1v1h-1zM325 512h1v1h-1zM326 495h1v1h-1zM327 512h1v1h-1zM328 495h1v1h-1zM329 512h1v1h-1zM330 495h1v1h-1zM331 512h1v1h-1zM332 495h1v1h-1zM333 512h1v1h-1zM334 495h1v1h-1zM335 512h1v1h-1zM336 495h1v1h-1zM337 512h1v1h-1zM338 495h1v1h-1zM339 512h1v1h-1zM340 495h1v1h-1zM341 512h1v1h-1zM342 495h1v1h-1zM343 512h1v1h-1zM344 495h1v1h-1zM345 512h1v1h-1zM346 495h1v1h-1zM347 512h1v1h-1zM348 495h1v1h-1zM349 512h1v1h-1zM350 495h1v1h-1zM351 512h1v1h-1zM352 495h1v1h-1zM353 512h1v1h-1zM354 495h1v1h-1zM355 512h1v1h-1zM356 495h1v1h-1zM357 512h1v1h-1zM358 495h1v1h-1zM359 512h1v1h-1zM360 495h1v1h-1zM361 512h1v1h-1zM362 495h1v1h-1zM363 512h1v1h-1zM364 495h1v1h-1zM365 512h1v1h-1zM366 495h1v1h-1zM367 512h1v1h-1zM368 495h1v1h-1zM369 512h1v1h-1zM370 495h1v1h-1zM371 512h1v1h-1zM372 495h1v1h-1zM373 512h1v1h-1zM374 495h1v1h-1zM375 512h1v1h-1zM376 495h1v1h-1zM377 512h1v1h-1zM378 495h1v1h-1zM379 512h1v1h-1zM380 495h1v1h-1zM381 512h1v1h-1zM382 495h1v1h-1zM383 512h1v1h-1zM384 495h1v1h-1zM385 512h1v1h-1zM386 495h1v1h-1zM387 512h1v1h-1zM388 495h1v1h-1zM389 512h1v1h-1zM390 495h1v1h-1zM391 512h1v1h-1zM392 495h1v1h-1zM393 512h1v1h-1zM394 495h1v1h-1zM395 512h1v1h-1zM396 495h1v1h-1zM397 512h1v1h-1zM398 495h1v1h-1zM399 512h1v1h-1zM400 495h1v1h-1zM401 512h1v1h-1zM402 495h1v1h-1zM403 512h1v1h-1zM404 495h1v1h-1zM405 512h1v1h-1zM406 495h1v1h-1zM407 512h1v1h-1zM408 495h1v1h-1zM409 512h1v1h-1zM410 495h1v1h-1zM411 512h1v1h-1zM412 495h1v1h-1zM413 512h1v1h-1zM414 495h1v1h-1zM415 512h1v1h-1zM416 495h1v1h-1zM417 512h1v1h-1zM418 495h1v1h-1zM419 512h1v1h-1zM420 495h1v1h-1zM421 512h1v1h-1zM422 495h1v1h-1zM423 512h1v1h-1zM424 495h1v1h-1zM425 512h1v1h-1zM426 495h1v1h-1zM427 512h1v1h-1zM428 495h1v1h-1zM429 512h1v1h-1zM430 495h1v1h-1zM431 512h1v1h-1zM432 495h1v1h-1zM433 512h1v1h-1zM434 495h1v1h-1zM435 512h1v1h-1zM436 495h1v1h-1zM437 512h1v1h-1zM438 495h1v1h-1zM439 512h1v1h-1zM440 495h1v1h-1zM441 512h1v1h-1zM442 495h1v1h-1zM443 512h1v1h-1zM444 495h1v1h-1zM445 512h1v1h-1zM446 495h1v1h-1zM447 512h1v1h-1zM448 495h1v1h-1zM449 512h1v1h-1zM450 495h1v1h-1zM451 512h1v1h-1zM452 495h1v1h-1zM453 512h1v1h-1zM454 495h1v1h-1zM455 512h1v1h-1zM456 495h1v1h-1zM457 512h1v1h-1zM458 495h1v1h-1zM459 512h1v1h-1zM460 495h1v1h-1zM461 512h1v1h-1zM462 495h1v1h-1zM463 512h1v1h-1zM464 495h1v1h-1zM465 512h1v1h-1zM466 495h1v1h-1zM467 512h1v1h-1zM468 495h1v1h-1zM469 512h1v1h-1zM470 495h1v1h-1zM471 512h1v1h-1zM472 495h1v1h-1zM473 512h1v1h-1zM474 495h1v1h-1zM475 512h1v1h-1zM476 495h1v1h-1zM477 512h1v1h-1zM478 495h1v1h-1zM479 512h1v1h-1zM480 495h1v1h-1zM481 512h1v1h-1zM482 495h1v1h-1zM483 512h1v1h-1zM484 495h1v1h-1zM485 512h1v1h-1zM486 495h1v1h-1zM487 512h1v1h-1zM488 495h1v1h-1zM489 512h1v1h-1zM490 495h1v1h-1zM491 512h1v1h-1zM492 495h1v1h-1zM493 512h1v1h-1zM494 495h1v1h-1zM495 512h1v1h-1zM496 495h1v1h-1zM497 512h1v1h-1zM498 495h1v1h-1zM499 512h1v1h-1zM500 495h1v1h-1zM501 512h1v1h-1zM502 495h1v1h-1zM503 512h1v1h-1zM504 495h1v1h-1zM505 512h1v1h-1zM506 495h1v1h-1zM507 512h1v1h-1zM508 495h1v1h-1zM509 512h1v1h-1zM510 495h1v1h-1zM511 512h1v1h-1zM512 495h1v1h-1zM513 512h1v1h-1zM514 495h1v1h-1zM515 512h1v1h-1zM516 495h1v1h-1zM517 512h1v1h-1zM518 495h1v1h-1zM519 512h1v1h-1zM520 495h1v1h-1zM521 512h1v1h-1zM522 495h1v1h-1zM523 512h1v1h-1zM524 495h1v1h-1zM525 512h1v1h-1zM526 495h1v1h-1zM527 512h1v1h-1zM528 495h1v1h-1zM529 512h1v1h-1zM530 495h1v1h-1zM531 512h1v1h-1zM532 495h1v1h-1zM533 512h1v1h-1zM534 495h1v1h-1zM535 512h1v1h-1zM536 495h1v1h-1zM537 512h1v1h-1zM538 495h1v1h-1zM539 512h1v1h-1zM540 495h1v1h-1zM541 512h1v1h-1zM542 495h1v1h-1zM543 512h1v1h-1zM544 495h1v1h-1zM545 512h1v1h-1zM546 495h1v1h-1zM547 512h1v1h-1zM548 495h1v1h-1zM549 512h1v1h-1zM550 495h1v1h-1zM551 512h1v1h-1zM552 495h1v1h-1zM553 512h1v1h-1zM554 495h1v1h-1zM555 512h1v1h-1zM556 495h1v1h-1zM557 512h1v1h-1zM558 495h1v1h-1zM559 512h1v1h-1zM560 495h1v1h-1zM561 512h1v1h-1zM562 495h1v1h-1zM563 512h1v1h-1zM564 495h1v1h-1zM565 512h1v1h-1zM566 495h1v1h-1zM567 512h1v1h-1zM568 495h1v1h-1zM569 512h1v1h-1zM570 495h1v1h-1zM571 512h1v1h-1zM572 495h1v1h-1zM573 512h1v1h-1zM574 495h1v1h-1zM575 512h1v1h-1zM576 495h1v1h-1zM577 512h1v1h-1zM578 495h1v1h-1zM579 512h1v1h-1zM580 495h1v1h-1zM581 512h1v1h-1zM582 495h1v1h-1zM583 512h1v1h-1zM584 495h1v1h-1zM585 512h1v1h-1zM586 495h1v1h-1zM587 512h1v1h-1zM588 495h1v1h-1zM589 512h1v1h-1zM590 495h1v1h-1zM591 512h1v1h-1zM592 495h1v1h-1zM593 512h1v1h-1zM594 495h1v1h-1zM595 512h1v1h-1zM596 495h1v1h-1zM597 512h1v1h-1zM598 495h1v1h-1zM599 512h1v1h-1zM600 495h1v1h-1zM601 512h1v1h-1zM602 495h1v1h-1zM603 512h1v1h-1zM604 495h1v1h-1zM605 512h1v1h-1zM606 495h1v1h-1zM607 512h1v1h-1zM608 495h1v1h-1zM609 512h1v1h-1zM610 495h1v1h-1zM611 512h1v1h-1zM612 495h1v1h-1zM613 512h1v1h-1zM614 495h1v1h-1zM615 512h1v1h-1zM616 495h1v1h-1zM617 512h1v1h-1zM618 495h1v1h-1zM619 512h1v1h-1zM620 495h1v1h-1zM621 512h1v1h-1zM622 495h1v1h-1zM623 512h1v1h-1zM624 495h1v1h-1zM625 512h1v1h-1zM626 495h1v1h-1zM627 512h1v1h-1zM628 495h1v1h-1zM629 512h1v1h-1zM630 495h1v1h-1zM631 512h1v1h-1zM632 495h1v1h-1zM633 512h1v1h-1zM634 495h1v1h-1zM635 512h1v1h-1zM636 495h1v1h-1zM637 512h1v1h-1zM638 495h1v1h-1zM639 512h1v1h-1zM640 495h1v1h-1zM641 512h1v1h-1zM642 495h1v1h-1zM643 512h1v1h-1zM644 495h1v1h-1zM645 512h1v1h-1zM646 495h1v1h-1zM647 512h1v1h-1zM648 495h1v1h-1zM649 512h1v1h-1zM650 495h1v1h-1zM651 512h1v1h-1zM652 495h1v1h-1zM653 512h1v1h-1zM654 495h1v1h-1zM655 512h1v1h-1zM656 495h1v1h-1zM657 512h1v1h-1zM658 495h1v1h-1zM659 512h1v1h-1zM660 495h1v1h-1zM661 512h1v1h-1zM662 495h1v1h-1zM663 512h1v1h-1zM664 495h1v1h-1zM665 512h1v1h-1zM666 495h1v1h-1zM667 512h1v1h-1zM668 495h1v1h-1zM669 512h1v1h-1zM670 495h1v1h-1zM671 512h1v1h-1zM672 495h1v1h-1zM673 512h1v1h-1zM674 495h1v1h-1zM675 512h1v1h-1zM676 495h1v1h-1zM677 512h1v1h-1zM678 495h1v1h-1zM679 512h1v1h-1zM680 495h1v1h-1zM681 512h1v1h-1zM682 495h1v1h-1zM683 512h1v1h-1zM684 495h1v1h-1zM685 512h1v1h-1zM686 495h1v1h-1zM687 512h1v1h-1zM688 495h1v1h-1zM689 512h1v1h-1zM690 495h1v1h-1zM691 512h1v1h-1zM692 495h1v1h-1zM693 512h1v1h-1zM694 495h1v1h-1zM695 512h1v1h-1zM696 495h1v1h-1zM697 512h1v1h-1zM698 495h1v1h-1zM699 512h1v1h-1zM700 495h1v1h-1zM701 512h1v1h-1zM702 495h1v1h-1zM703 512h1v1h-1zM704 495h1v1h-1zM705 512h1v1h-1zM706 495h1v1h-1zM707 512h1v1h-1zM708 495h1v1h-1zM709 512h1v1h-1zM710 495h1v1h-1zM711 512h1v1h-1zM712 495h1v1h-1zM713 512h1v1h-1zM714 495h1v1h-1zM715 512h1v1h-1zM716 495h1v1h-1zM717 512h1v1h-1zM718 495h1v1h-1zM719 512h1v1h-1zM720 495h1v1h-1zM721 512h1v1h-1zM721 496h1v1h-1zM4 497h1v1h-1zM721 498h1v1h-1zM4 499h1v1h-1zM721 500h1v1h-1zM4 501h1v1h-1zM721 502h1v1h-1zM4 503h1v1h-1zM721 504h1v1h-1zM4 505h1v1h-1zM721 506h1v1h-1zM4 507h1v1h-1zM721 508h1v1h-1zM4 509h1v1h-1zM721 510h1v1h-1zM4 511h1v1h-1z"/>
 <g fill="#a8a8a8">
  <rect x="721" y="573" width="2" height="2"/>
  <rect x="718" y="576" width="2" height="2"/><rect x="721" y="576" width="2" height="2"/>
  <rect x="715" y="579" width="2" height="2"/><rect x="718" y="579" width="2" height="2"/><rect x="721" y="579" width="2" height="2"/>
 </g>
</svg>
<div class="t" style="left:5.6px;top:498px;font-size:11px;letter-spacing:0.25px;">28.05.2017</div>
<div class="t" style="left:115.3px;top:498px;font-size:11px;letter-spacing:0.45px;">6:08:24</div>
<div class="t" style="left:238px;top:498px;font-size:11px;transform:scaleX(0.985);">Program is started and configured</div>

</body></html>
